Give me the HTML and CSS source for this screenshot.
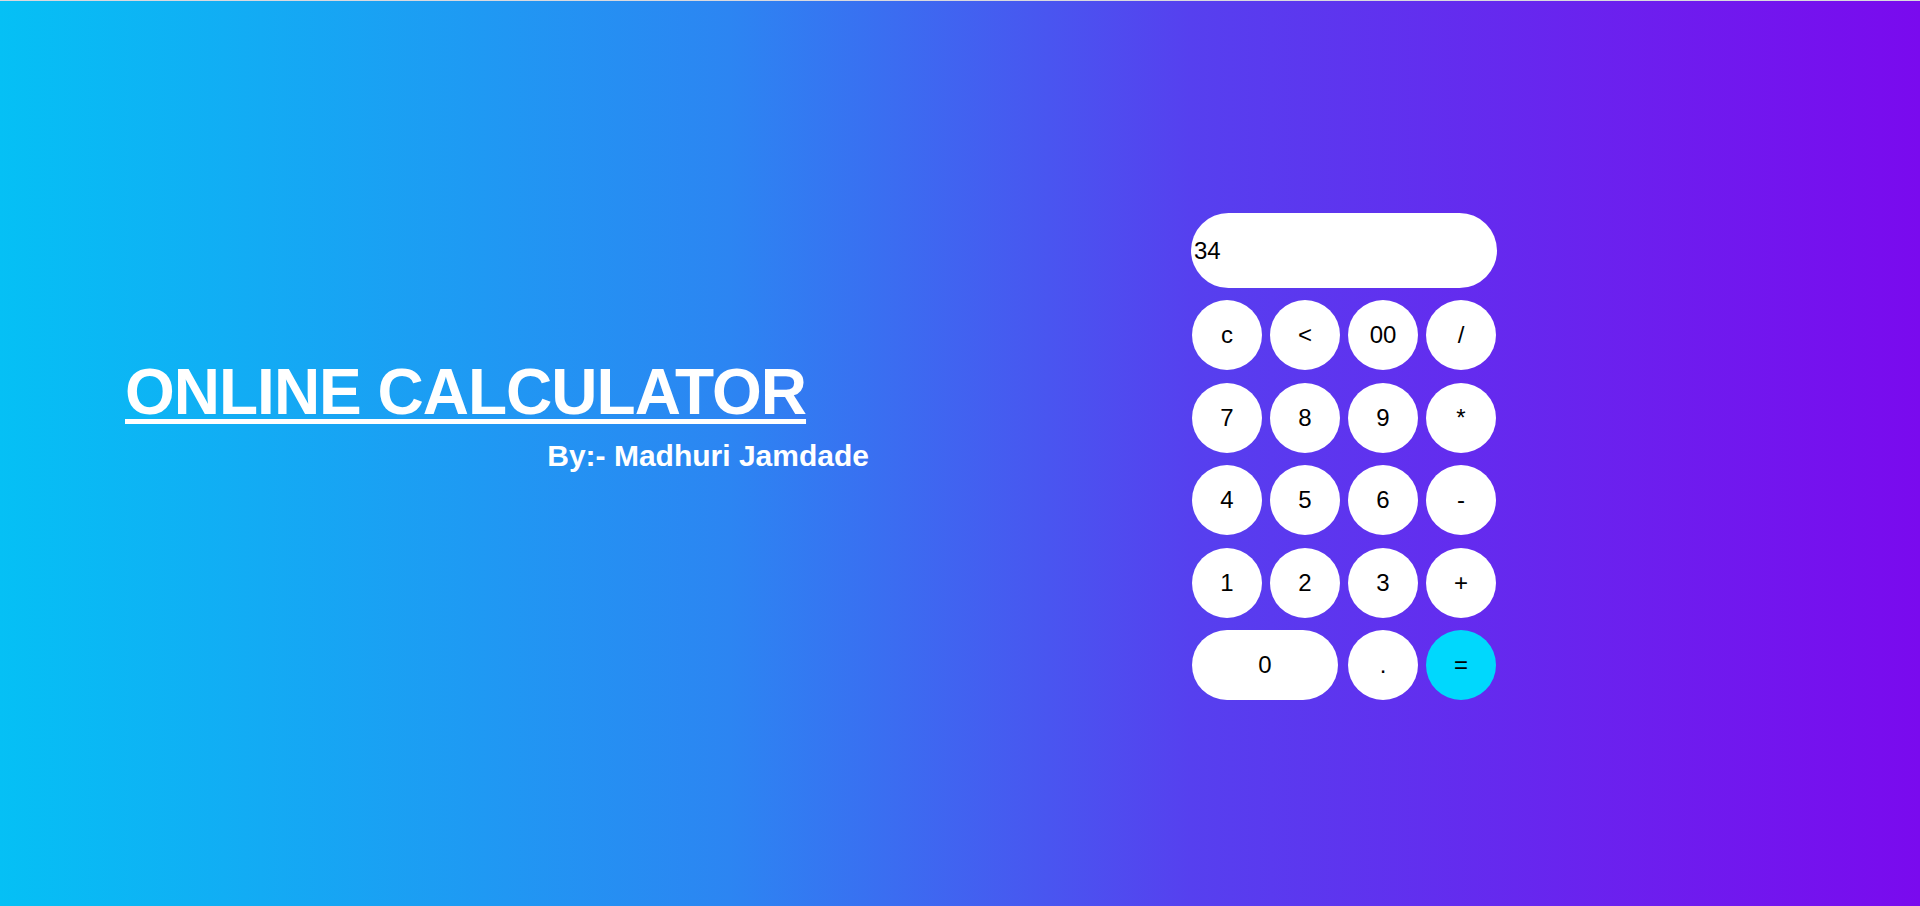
FILE: index.html
```html
<!DOCTYPE html>
<html lang="en">
<head>
<meta charset="utf-8">
<title>Online Calculator</title>
<link rel="stylesheet" href="styles.css">
</head>
<body>
<main class="page">
  <section class="intro">
    <h1 class="title">ONLINE CALCULATOR</h1>
    <p class="byline">By:- Madhuri Jamdade</p>
  </section>
  <section class="calc">
    <div class="display">34</div>
    <div class="keys">
      <button class="key">c</button>
      <button class="key">&lt;</button>
      <button class="key">00</button>
      <button class="key">/</button>
      <button class="key">7</button>
      <button class="key">8</button>
      <button class="key">9</button>
      <button class="key">*</button>
      <button class="key">4</button>
      <button class="key">5</button>
      <button class="key">6</button>
      <button class="key">-</button>
      <button class="key">1</button>
      <button class="key">2</button>
      <button class="key">3</button>
      <button class="key">+</button>
      <button class="key key-wide">0</button>
      <button class="key">.</button>
      <button class="key key-equal">=</button>
    </div>
  </section>
</main>
</body>
</html>
```

FILE: styles.css
```css
* { box-sizing: border-box; }

html, body {
  margin: 0;
  padding: 0;
  height: 100%;
}

body {
  font-family: "Liberation Sans", Arial, sans-serif;
  border-top: 1px solid #d9d9de;
  overflow: hidden;
}

.page {
  display: flex;
  align-items: flex-start;
  height: 905px;
  padding-left: 125px;
  background: linear-gradient(to right, #05c0f5 0%, #2c85f2 38%, #5640ef 62%, #7a0aee 100%);
}

.intro {
  width: 744px;
  margin-top: 356px;
  color: #fff;
}

.title {
  margin: 0;
  font-size: 64px;
  font-weight: 700;
  letter-spacing: -1px;
  line-height: 71px;
  text-decoration: underline;
  text-decoration-thickness: 5px;
  text-underline-offset: 5px;
  white-space: nowrap;
}

.byline {
  margin: 10px 0 0;
  font-size: 30px;
  font-weight: 700;
  line-height: 35px;
  text-align: right;
}

.calc {
  margin-left: 322px;
  margin-top: 212px;
  width: 306px;
}

.display {
  height: 75px;
  border-radius: 38px;
  background: #fff;
  color: #000;
  font-size: 24px;
  display: flex;
  align-items: center;
  padding-left: 3px;
}

.keys {
  margin-top: 12px;
  padding-left: 1px;
  display: grid;
  grid-template-columns: repeat(4, 70px);
  column-gap: 8px;
  row-gap: 12.5px;
}

.key {
  width: 70px;
  height: 70px;
  border: none;
  border-radius: 35px;
  background: #fff;
  color: #000;
  font-family: "Liberation Sans", Arial, sans-serif;
  font-size: 24px;
  padding: 0;
  display: flex;
  align-items: center;
  justify-content: center;
}

.key-wide {
  grid-column: span 2;
  width: 146px;
}

.key-equal {
  background: #00d8fd;
}
```
